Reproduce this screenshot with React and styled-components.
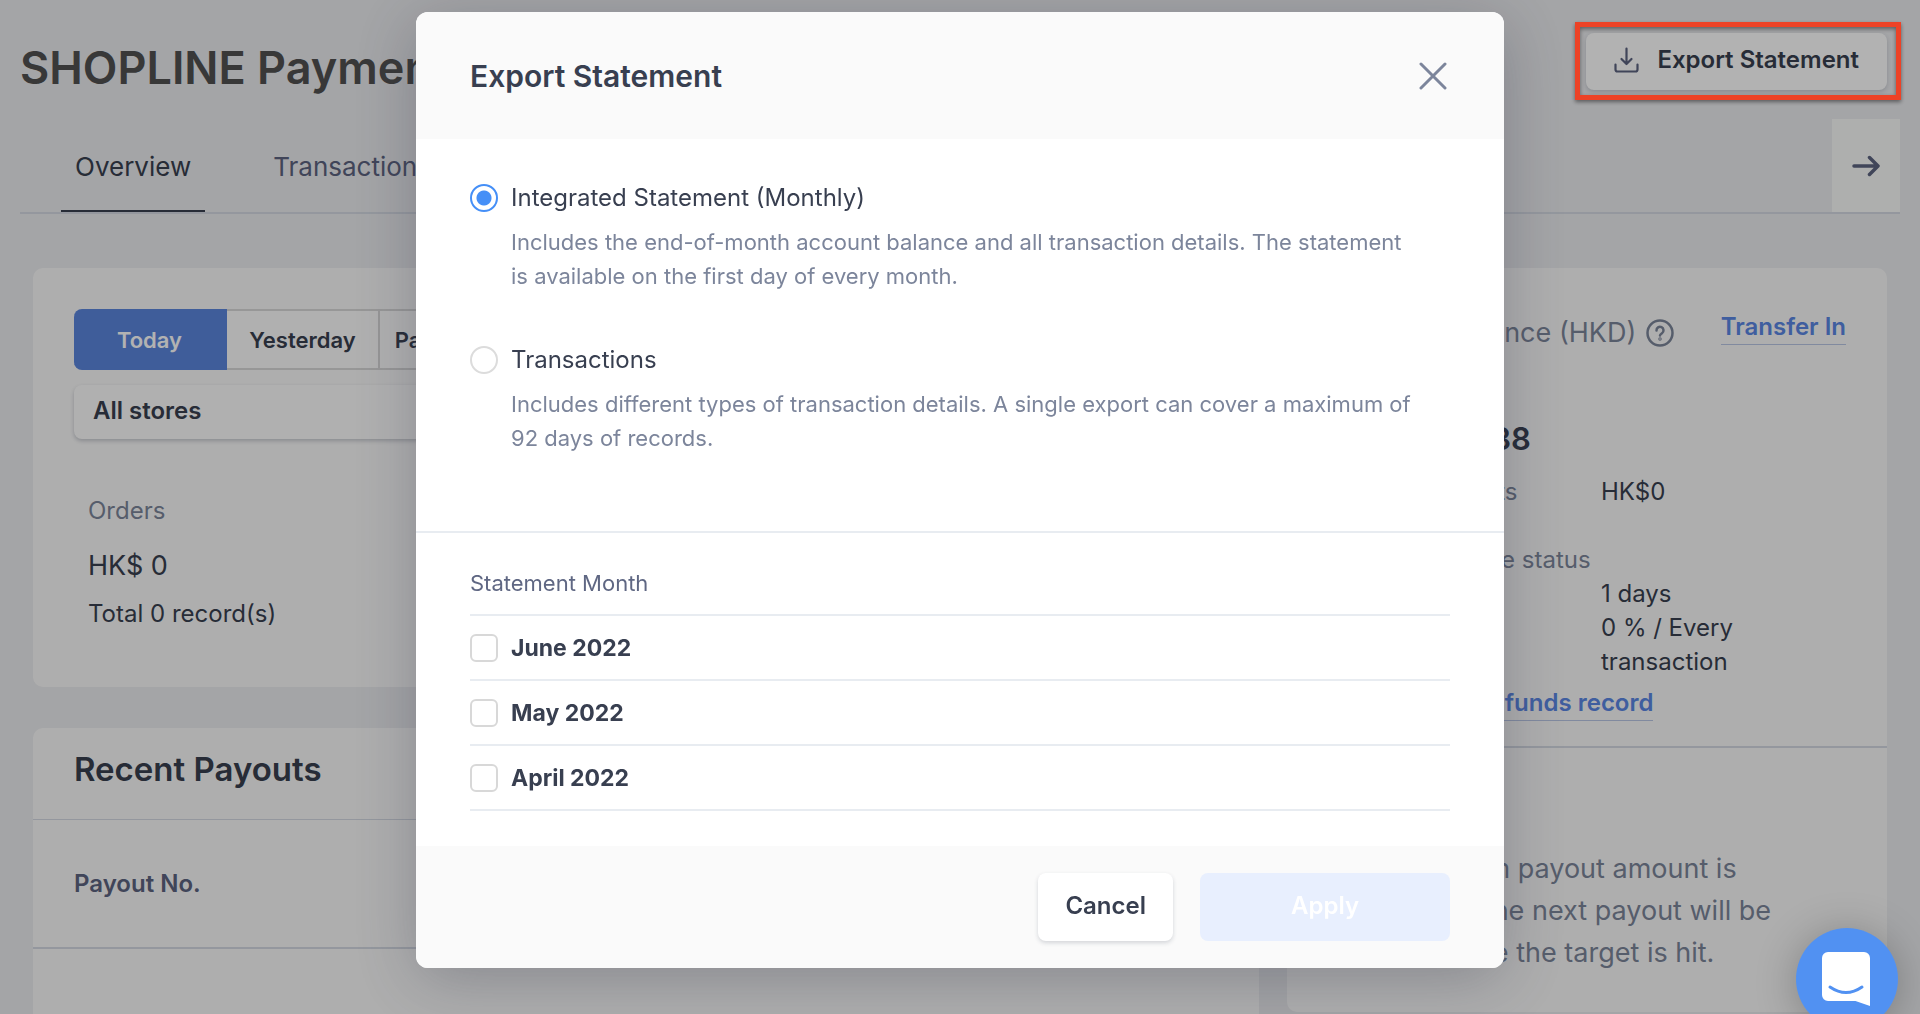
import {useState} from "react"
import styled, {createGlobalStyle} from "styled-components"

const GlobalStyle = createGlobalStyle`
  *{
    box-sizing:border-box;
  }
  body{
    margin:0;
    background:#ebecef;
    color:#383f50;
    font-family:Inter, "Liberation Sans", sans-serif;
    font-size:24px;
    line-height:34px;
  }
  button, select, input{
    font:inherit;
    color:inherit;
    margin:0;
  }
  h1, h2, p, ul, dl, dd{
    margin:0;
    padding:0;
  }
`
// page behind the dialog, scroll is locked while the dialog is open
const Page = styled.div`
  height:100vh;
  overflow:hidden;
  padding:0 20px;
`
const TopBar = styled.header`
  display:flex;
  justify-content:space-between;
  align-items:flex-start;
  height:119px;
  padding:33px 13px 0 0;
`
const PageTitle = styled.h1`
  color:#515151;
  font-size:45px;
  font-weight:600;
  line-height:70px;
`
const WhiteButton = styled.button`
  display:flex;
  align-items:center;
  justify-content:center;
  gap:18px;
  height:${({$tall})=>$tall ? "68px" : "57px"};
  padding:${({$tall})=>$tall ? "0 27px 2px" : "0 28px 4px"};
  border:none;
  border-radius:8px;
  background:#fff;
  box-shadow:0 2px 4px rgba(40,48,70,.18);
  font-weight:600;
`
const Tabs = styled.nav`
  display:flex;
  height:95px;
  padding-left:41px;
  border-bottom:2px solid #d4d9e2;
`
const Tab = styled.a`
  display:flex;
  align-items:center;
  height:93px;
  margin-right:54px;
  padding:5px 14px 0;
  border-bottom:2px solid ${({$active})=>$active ? "#383f50" : "transparent"};
  color:${({$active})=>$active ? "#383f50" : "#5c6380"};
  font-size:26px;
  text-decoration:none;
`
const TabArrow = styled.button`
  display:flex;
  align-items:center;
  justify-content:center;
  width:68px;
  height:93px;
  margin-left:auto;
  border:none;
  background:#f9fbf9;
  color:#5c6380;
`
const Columns = styled.main`
  display:grid;
  grid-template-columns:minmax(0, 1fr) 600px;
  align-items:start;
  gap:28px;
  padding:54px 13px 0;
`
const Stack = styled.div`
  display:flex;
  flex-direction:column;
  gap:41px;
`
const Card = styled.section`
  border-radius:10px;
  background:#fafafa;
`
const Summary = styled(Card)`
  padding:41px 41px 56px;
`
const Segments = styled.div`
  display:flex;
  height:61px;
`
const Segment = styled.button`
  min-width:153px;
  padding:0 12px;
  border:2px solid ${({$active})=>$active ? "#5b86dd" : "#d8d8d8"};
  border-left-width:0;
  border-radius:${({$active})=>$active ? "8px 0 0 8px" : "0"};
  background:${({$active})=>$active ? "#5b86dd" : "#fdfdfd"};
  color:${({$active})=>$active ? "#fff" : "#383f50"};
  font-size:22px;
  font-weight:600;
`
const StoreSelect = styled.select`
  appearance:none;
  display:block;
  width:100%;
  height:54px;
  margin-top:15px;
  padding:0 19px 2px;
  border:none;
  border-radius:8px;
  background:#fdfdfd;
  box-shadow:0 2px 4px rgba(40,48,70,.25);
  font-weight:600;
`
const Orders = styled.div`
  padding:55px 14px 0;
`
const Muted = styled.p`
  color:#7c869a;
`
const OrderAmount = styled.p`
  margin:18px 0 11px;
  font-size:27px;
  line-height:40px;
`
const PayoutTitle = styled.h2`
  padding:21px 41px 30px;
  border-bottom:1px solid #d4d9e2;
  font-size:33px;
  font-weight:600;
  line-height:40px;
`
const PayoutTable = styled.table`
  width:100%;
  border-collapse:collapse;
  th{
    height:128px;
    padding:0 41px;
    border-bottom:2px solid #d4d9e2;
    color:#5c6380;
    font-weight:600;
    text-align:left;
  }
  td{
    height:128px;
  }
`
const Balance = styled.div`
  padding:42px 41px 25px;
  border-bottom:2px solid #d4d9e2;
`
const BalanceHead = styled.div`
  display:flex;
  align-items:flex-start;
  justify-content:space-between;
`
const BalanceTitle = styled.h2`
  display:flex;
  align-items:center;
  gap:10px;
  color:#7c869a;
  font-size:27px;
  font-weight:400;
  line-height:46px;
`
const TextLink = styled.a`
  display:block;
  width:fit-content;
  border-bottom:1px solid #b9c6e4;
  color:#5b87e4;
  font-weight:600;
  text-decoration:none;
`
const BalanceAmount = styled.p`
  margin-top:63px;
  font-size:31px;
  font-weight:600;
  line-height:40px;
`
const Facts = styled.dl`
  display:grid;
  grid-template-columns:273px 160px;
  margin-top:${({$gap})=>$gap || "0"};
  dt{
    color:#7c869a;
  }
`
const StatusTitle = styled(Muted)`
  margin-top:34px;
`
const BalanceFoot = styled.div`
  margin-top:7px;
`
const PayoutNote = styled.p`
  padding:100px 41px 38px;
  color:#7c869a;
  font-size:27px;
  line-height:42px;
`
const Overlay = styled.div`
  position:fixed;
  inset:0;
  display:flex;
  align-items:flex-start;
  justify-content:center;
  padding-top:12px;
  background:rgba(0,0,0,.3);
`
const Dialog = styled.form`
  width:1088px;
  max-width:94%;
  border-radius:12px;
  background:#fff;
  box-shadow:0 12px 64px rgba(44,48,66,.3);
  overflow:hidden;
`
const DialogHead = styled.div`
  display:flex;
  align-items:center;
  justify-content:space-between;
  height:127px;
  padding:0 57px 0 54px;
  background:#fafafa;
`
const DialogTitle = styled.h2`
  font-size:30px;
  font-weight:600;
  line-height:40px;
`
const CloseButton = styled.button`
  display:flex;
  padding:0;
  border:none;
  background:none;
  color:#7c859b;
`
const Types = styled.div`
  display:flex;
  flex-direction:column;
  gap:50px;
  padding:42px 54px 76px;
  border-bottom:2px solid #e8ecf1;
`
const TypeOption = styled.label`
  display:grid;
  grid-template-columns:28px 1fr;
  align-items:center;
  column-gap:13px;
  row-gap:10px;
`
const Hint = styled.span`
  grid-column:2;
  padding-right:30px;
  color:#7c859b;
  font-size:22px;
`
const Radio = styled.input`
  appearance:none;
  width:28px;
  height:28px;
  border:2px solid #dcdcdc;
  border-radius:50%;
  background:#fff;
  &:checked{
    border-color:#458ff7;
    background:radial-gradient(circle, #458ff7 7px, #fff 8px);
  }
`
const Months = styled.div`
  padding:33px 54px 35px;
`
const MonthsTitle = styled.p`
  margin-bottom:14px;
  color:#5f6783;
  font-size:22px;
`
const MonthList = styled.ul`
  border-top:2px solid #e8ecf1;
  list-style:none;
`
const MonthRow = styled.li`
  height:65px;
  border-bottom:2px solid #e8ecf1;
  label{
    display:flex;
    align-items:center;
    gap:13px;
    height:63px;
    font-size:23px;
    font-weight:700;
  }
`
const Check = styled.input`
  appearance:none;
  width:28px;
  height:28px;
  border:2px solid #d8d8d8;
  border-radius:6px;
  background:#fff;
  &:checked{
    border-color:#458ff7;
    background:#458ff7;
  }
`
const DialogFoot = styled.div`
  display:flex;
  justify-content:flex-end;
  gap:27px;
  padding:27px 54px;
  background:#fafafa;
`
const ApplyButton = styled.button`
  width:250px;
  height:68px;
  padding:0 0 2px;
  border:none;
  border-radius:8px;
  background:#e8effe;
  color:#fff;
  font-weight:600;
`
const Highlight = styled.div`
  position:fixed;
  top:22px;
  right:19px;
  width:326px;
  height:78px;
  border:5px solid #ed4226;
  box-shadow:0 2px 4px rgba(0,0,0,.45), inset 0 2px 4px rgba(0,0,0,.45);
  pointer-events:none;
`
const ChatButton = styled.button`
  position:fixed;
  right:22px;
  bottom:-16px;
  display:flex;
  justify-content:center;
  width:102px;
  height:102px;
  padding:24px 2px 0 0;
  border:none;
  border-radius:50%;
  background:#5191f2;
  box-shadow:0 4px 40px rgba(0,0,0,.25);
`

const DownloadIcon = ()=>(
  <svg width="25" height="26" viewBox="0 0 25 26" fill="none" stroke="#5c6380" strokeWidth="2.200" strokeLinecap="round" strokeLinejoin="round">
    <path d="M12.500 1.500v15M7.500 12l5 5 5-5M1.500 17.500v5a2 2 0 0 0 2 2h18a2 2 0 0 0 2-2v-5" />
  </svg>
)
const ArrowIcon = ()=>(
  <svg width="28" height="22" viewBox="0 0 28 22" fill="none" stroke="currentColor" strokeWidth="3.500" strokeLinecap="round" strokeLinejoin="round">
    <path d="M2 11h23M17.500 2.500l8.500 8.500-8.500 8.500" />
  </svg>
)
const CloseIcon = ()=>(
  <svg width="28" height="28" viewBox="0 0 28 28" fill="none" stroke="currentColor" strokeWidth="3" strokeLinecap="round">
    <path d="M2 2l24 24M26 2L2 26" />
  </svg>
)
const HelpIcon = ()=>(
  <svg width="28" height="28" viewBox="0 0 28 28" fill="none" stroke="#7c869a" strokeWidth="2.500" strokeLinecap="round">
    <circle cx="14" cy="14" r="12.500" />
    <path d="M10.500 11.500a3.500 3.500 0 1 1 5.500 2.700c-1.300.9-2 1.500-2 2.300" />
    <circle cx="14" cy="20" r=".5" />
  </svg>
)
const ChatIcon = ()=>(
  <svg width="48" height="54" viewBox="0 0 48 54">
    <path fill="#fff" d="M6 0h36a6 6 0 0 1 6 6v48l-14.500-5H6a6 6 0 0 1-6-6V6a6 6 0 0 1 6-6z" />
    <path d="M8 35q16 11 32 0" fill="none" stroke="#5191f2" strokeWidth="3" strokeLinecap="round" />
  </svg>
)

const types = [
  {
    id:"monthly",
    name:"Integrated Statement (Monthly)",
    hint:"Includes the end-of-month account balance and all transaction details. The statement is available on the first day of every month.",
  },
  {
    id:"transactions",
    name:"Transactions",
    hint:"Includes different types of transaction details. A single export can cover a maximum of 92 days of records.",
  },
]
const months = ["June 2022", "May 2022", "April 2022"]

const ExportDialog = ()=>{
  const [type, setType] = useState("monthly")
  return (
    <Overlay>
      <Dialog role="dialog" aria-labelledby="dialogTitle" onSubmit={(e)=>e.preventDefault()}>
        <DialogHead>
          <DialogTitle id="dialogTitle">Export Statement</DialogTitle>
          <CloseButton type="button" aria-label="Close"><CloseIcon /></CloseButton>
        </DialogHead>
        <Types>
          {
            types.map((item)=>(
              <TypeOption key={item.id}>
                <Radio type="radio" name="type" checked={type===item.id} onChange={()=>setType(item.id)} />
                <span>{item.name}</span>
                <Hint>{item.hint}</Hint>
              </TypeOption>
            ))
          }
        </Types>
        <Months>
          <MonthsTitle>Statement Month</MonthsTitle>
          <MonthList>
            {
              months.map((month)=>(
                <MonthRow key={month}>
                  <label><Check type="checkbox" name="month" value={month} />{month}</label>
                </MonthRow>
              ))
            }
          </MonthList>
        </Months>
        <DialogFoot>
          <WhiteButton type="button" $tall>Cancel</WhiteButton>
          <ApplyButton type="submit" disabled>Apply</ApplyButton>
        </DialogFoot>
      </Dialog>
    </Overlay>
  )
}

const App = ()=>{
  return (
    <>
      <GlobalStyle />
      <Page>
        <TopBar>
          <PageTitle>SHOPLINE Payments</PageTitle>
          <WhiteButton><DownloadIcon />Export Statement</WhiteButton>
        </TopBar>
        <Tabs>
          <Tab href="#overview" $active>Overview</Tab>
          <Tab href="#transactions">Transactions</Tab>
          <TabArrow aria-label="More tabs"><ArrowIcon /></TabArrow>
        </Tabs>
        <Columns>
          <Stack>
            <Summary>
              <Segments>
                <Segment $active>Today</Segment>
                <Segment>Yesterday</Segment>
                <Segment>Past 7 days</Segment>
              </Segments>
              <StoreSelect aria-label="Store">
                <option>All stores</option>
              </StoreSelect>
              <Orders>
                <Muted>Orders</Muted>
                <OrderAmount>HK$ 0</OrderAmount>
                <p>Total 0 record(s)</p>
              </Orders>
            </Summary>
            <Card>
              <PayoutTitle>Recent Payouts</PayoutTitle>
              <PayoutTable>
                <thead>
                  <tr><th>Payout No.</th></tr>
                </thead>
                <tbody>
                  <tr><td></td></tr>
                </tbody>
              </PayoutTable>
            </Card>
          </Stack>
          <Card>
            <Balance>
              <BalanceHead>
                <BalanceTitle>Available Balance (HKD)<HelpIcon /></BalanceTitle>
                <TextLink href="#transfer">Transfer In</TextLink>
              </BalanceHead>
              <BalanceAmount>HK$ 1,234.88</BalanceAmount>
              <Facts $gap="16px">
                <dt>Pending payouts</dt>
                <dd>HK$0</dd>
              </Facts>
              <StatusTitle>Account reserve status</StatusTitle>
              <Facts>
                <dt>Reserve period</dt>
                <dd>1 days</dd>
                <dt>Percentage</dt>
                <dd>0 % / Every transaction</dd>
              </Facts>
              <BalanceFoot>
                <TextLink href="#record">See all reserve funds record</TextLink>
              </BalanceFoot>
            </Balance>
            <PayoutNote>
              Your minimum payout amount is<br />
              not issued. The next payout will be<br />
              released once the target is hit.
            </PayoutNote>
          </Card>
        </Columns>
      </Page>
      <ExportDialog />
      <Highlight />
      <ChatButton aria-label="Open chat"><ChatIcon /></ChatButton>
    </>
  )
}

export default App
